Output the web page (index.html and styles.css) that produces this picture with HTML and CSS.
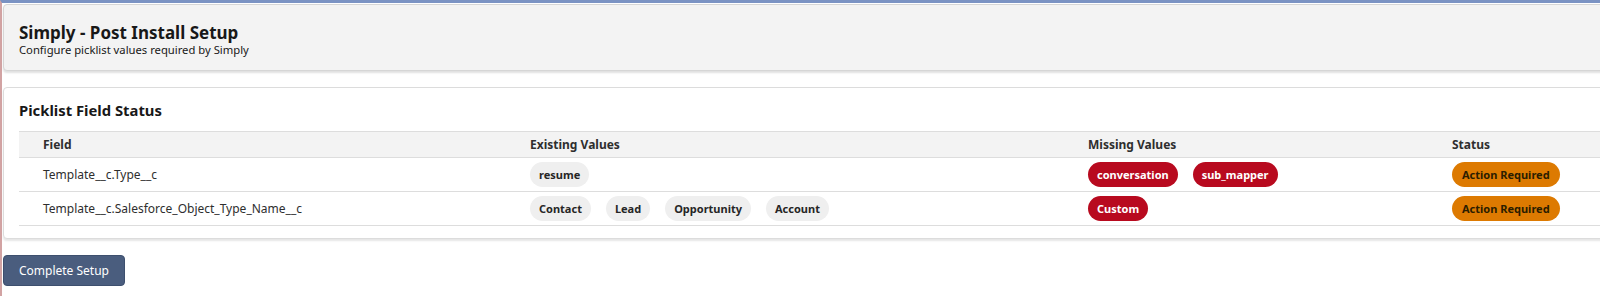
FILE: index.html
```html
<!DOCTYPE html>
<html lang="en">
<head>
<meta charset="utf-8">
<title>Simply - Post Install Setup</title>
<link rel="stylesheet" href="styles.css">
</head>
<body>
<div class="frame">
  <div class="page">
    <header class="header-card">
      <h1 class="title">Simply - Post Install Setup</h1>
      <p class="subtitle">Configure picklist values required by Simply</p>
    </header>

    <section class="card">
      <h2 class="card-title">Picklist Field Status</h2>
      <table class="status-table">
        <colgroup>
          <col class="col-field">
          <col class="col-existing">
          <col class="col-missing">
          <col class="col-status">
        </colgroup>
        <thead>
          <tr>
            <th>Field</th>
            <th>Existing Values</th>
            <th>Missing Values</th>
            <th>Status</th>
          </tr>
        </thead>
        <tbody>
          <tr>
            <td>Template__c.Type__c</td>
            <td><div class="pills"><span class="pill pill-existing">resume</span></div></td>
            <td><div class="pills"><span class="pill pill-missing">conversation</span><span class="pill pill-missing">sub_mapper</span></div></td>
            <td><span class="pill pill-warning">Action Required</span></td>
          </tr>
          <tr>
            <td>Template__c.Salesforce_Object_Type_Name__c</td>
            <td><div class="pills"><span class="pill pill-existing">Contact</span><span class="pill pill-existing">Lead</span><span class="pill pill-existing">Opportunity</span><span class="pill pill-existing">Account</span></div></td>
            <td><div class="pills"><span class="pill pill-missing">Custom</span></div></td>
            <td><span class="pill pill-warning">Action Required</span></td>
          </tr>
        </tbody>
      </table>
    </section>

    <button class="btn-primary" type="button">Complete Setup</button>
  </div>
</div>
</body>
</html>
```

FILE: styles.css
```css
html, body {
  margin: 0;
  padding: 0;
  overflow: hidden;
  background: #ffffff;
}

body {
  font-family: "Noto Sans", "Open Sans", "DejaVu Sans", sans-serif;
  color: #181818;
}

.frame {
  border-top: 3px solid #7b93c3;
  border-left: 2px solid #d2a3a3;
  min-height: 296px;
  box-sizing: border-box;
}

.page {
  width: 1680px;
  padding: 1px 0 0 1px;
}

.header-card {
  background: #f3f3f3;
  border: 1px solid #d6d6d6;
  border-radius: 4px;
  box-shadow: 0 2px 2px rgba(0, 0, 0, 0.12);
  padding: 17px 15px 0;
  box-sizing: border-box;
  height: 67px;
}

.title {
  margin: 0;
  font-size: 17px;
  line-height: 21px;
  font-weight: 700;
  color: #181818;
}

.subtitle {
  margin: 0;
  font-size: 11.25px;
  line-height: 14px;
  color: #181818;
}

.card {
  margin-top: 16px;
  background: #ffffff;
  border: 1px solid #dcdcdc;
  border-radius: 4px;
  box-shadow: 0 2px 2px rgba(0, 0, 0, 0.1);
  padding: 12px 15px 12px;
}

.card-title {
  margin: 0 0 11px;
  font-size: 14.8px;
  line-height: 20px;
  font-weight: 700;
}

.status-table {
  border-collapse: collapse;
  table-layout: fixed;
  width: 1640px;
  font-size: 12px;
}

.col-field { width: 487px; }
.col-existing { width: 558px; }
.col-missing { width: 364px; }
.col-status { width: 231px; }

.status-table th {
  background: #f3f3f3;
  text-align: left;
  font-weight: 700;
  color: #2e2e2e;
  height: 25px;
  padding: 0 24px;
  border-top: 1px solid #dddddd;
  border-bottom: 1px solid #dddddd;
}

.status-table td {
  height: 33px;
  padding: 0 24px;
  border-bottom: 1px solid #dddddd;
  color: #2e2e2e;
  vertical-align: middle;
}

.pills {
  display: flex;
  gap: 15px;
}

.pill {
  display: inline-flex;
  align-items: center;
  height: 25px;
  padding: 0 9px;
  border-radius: 13px;
  font-size: 11px;
  font-weight: 700;
  white-space: nowrap;
  box-sizing: border-box;
}

.pill-existing {
  background: #efefef;
  color: #262626;
}

.pill-missing {
  background: #b80a1f;
  color: #ffffff;
}

.pill-warning {
  background: #dd7a01;
  color: #2b1d00;
  padding: 0 10px;
}

.btn-primary {
  margin-top: 16px;
  display: block;
  width: 122px;
  height: 31px;
  background: #4a5d7e;
  color: #ffffff;
  border: 1px solid #3d4f6e;
  border-radius: 4px;
  font-family: inherit;
  font-size: 12px;
  padding: 0;
  cursor: pointer;
}
```
